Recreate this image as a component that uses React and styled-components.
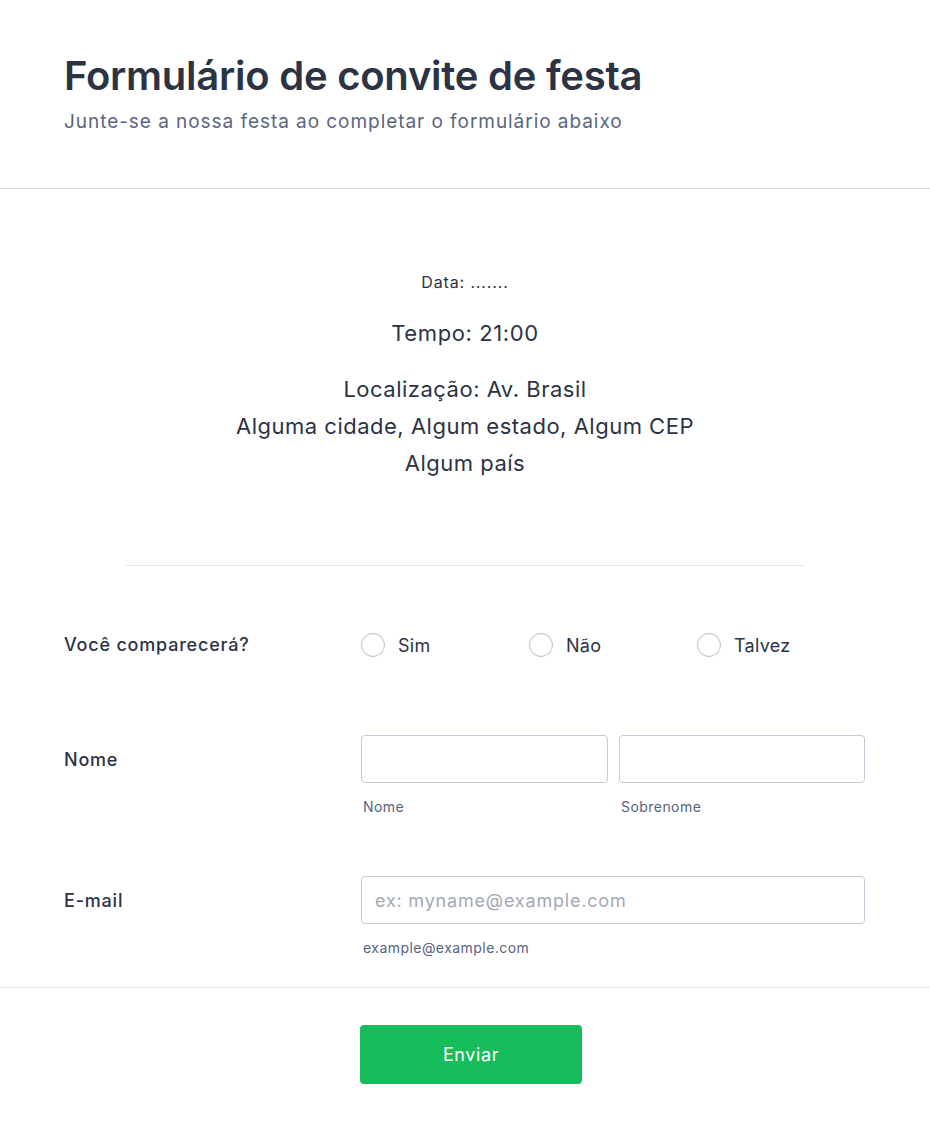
import React from "react";
import styled, { createGlobalStyle } from "styled-components";

const GlobalStyle = createGlobalStyle`
  body {
    margin: 0;
    background: #ffffff;
    font-family: Inter, "Noto Sans", sans-serif;
    color: #2c3345;
  }
  * { box-sizing: border-box; }
`;

const Page = styled.div`
  width: 930px;
  min-height: 1134px;
  background: #fff;
`;

const Header = styled.header`
  padding: 52px 64px 0;
  height: 189px;
  border-bottom: 1px solid #d8dae9;
`;

const Title = styled.h1`
  margin: 0;
  font-size: 40px;
  line-height: 48px;
  font-weight: 600;
  letter-spacing: -0.25px;
  color: #2c3345;
`;

const Subtitle = styled.p`
  margin: 10px 0 0;
  font-size: 19px;
  line-height: 24px;
  letter-spacing: 0.95px;
  color: #5b6580;
`;

const Info = styled.section`
  padding: 81px 64px 83px;
  text-align: center;
  color: #2c3345;
`;

const InfoLine = styled.p`
  margin: 0;
  font-size: ${(p) => p.size}px;
  line-height: ${(p) => p.lh}px;
  letter-spacing: ${(p) => p.ls || 0}px;
  margin-bottom: ${(p) => p.mb || 0}px;
`;

const Divider = styled.hr`
  border: 0;
  border-top: 1px solid #e6e6e6;
  margin: 0 126px;
`;

const Row = styled.div`
  display: grid;
  grid-template-columns: 297px 504px;
  padding: 0 64px;
  align-items: ${(p) => p.align || "center"};
  margin-top: ${(p) => p.mt}px;
`;

const Label = styled.div`
  font-size: 18px;
  font-weight: 500;
  letter-spacing: 0.8px;
  color: #2c3345;
  line-height: 24px;
  padding-top: ${(p) => p.pt || 0}px;
`;

const Options = styled.div`
  display: grid;
  grid-template-columns: 168px 168px 168px;
`;

const Option = styled.label`
  display: flex;
  align-items: center;
  gap: 13px;
  font-size: 18px;
  letter-spacing: 0.3px;
  color: #2c3345;
`;

const Circle = styled.span`
  width: 24px;
  height: 24px;
  border-radius: 50%;
  border: 1px solid #b8bdc9;
  background: #fff;
`;

const Fields = styled.div`
  display: grid;
  grid-template-columns: ${(p) => (p.split ? "247px 246px" : "1fr")};
  column-gap: 11px;
`;

const Field = styled.div`
  display: flex;
  flex-direction: column;
`;

const Input = styled.input`
  height: 48px;
  width: 100%;
  border: 1px solid #c3cad8;
  border-radius: 4px;
  padding: 0 13px;
  font-family: Inter, "Noto Sans", sans-serif;
  font-size: 18px;
  letter-spacing: 0.8px;
  color: #2c3345;
  background: #fff;
  outline: none;
  &::placeholder {
    color: #a3a9b8;
  }
`;

const SubLabel = styled.span`
  margin-top: 15px;
  font-size: 14px;
  line-height: 18px;
  letter-spacing: 0.45px;
  color: #57647e;
  padding-left: 2px;
`;

const Footer = styled.div`
  margin-top: 30px;
  border-top: 1px solid #e6e6e6;
  padding: 37px 0 50px;
  display: flex;
  justify-content: center;
`;

const Button = styled.button`
  width: 222px;
  height: 59px;
  margin-left: 12px;
  border: 0;
  border-radius: 4px;
  background: #18bd5b;
  color: #fff;
  font-family: Inter, "Noto Sans", sans-serif;
  font-size: 18px;
  font-weight: 400;
  letter-spacing: 0.6px;
`;

export default function App() {
  return (
    <Page>
      <GlobalStyle />
      <Header>
        <Title>Formulário de convite de festa</Title>
        <Subtitle>Junte-se a nossa festa ao completar o formulário abaixo</Subtitle>
      </Header>

      <Info>
        <InfoLine size={16} lh={24} ls={0.85} mb={21}>Data: .......</InfoLine>
        <InfoLine size={22} lh={37} ls={0.6} mb={19}>Tempo: 21:00</InfoLine>
        <InfoLine size={22} lh={37} ls={0.5}>Localização: Av. Brasil</InfoLine>
        <InfoLine size={22} lh={37} ls={0.5}>Alguma cidade, Algum estado, Algum CEP</InfoLine>
        <InfoLine size={22} lh={37} ls={0.5}>Algum país</InfoLine>
      </Info>

      <Divider />

      <Row mt={67}>
        <Label>Você comparecerá?</Label>
        <Options>
          <Option><Circle />Sim</Option>
          <Option><Circle />Não</Option>
          <Option><Circle />Talvez</Option>
        </Options>
      </Row>

      <Row mt={78} align="start">
        <Label pt={13}>Nome</Label>
        <Fields split>
          <Field>
            <Input type="text" />
            <SubLabel>Nome</SubLabel>
          </Field>
          <Field>
            <Input type="text" />
            <SubLabel>Sobrenome</SubLabel>
          </Field>
        </Fields>
      </Row>

      <Row mt={60} align="start">
        <Label pt={13}>E-mail</Label>
        <Fields>
          <Field>
            <Input type="email" placeholder="ex: myname@example.com" />
            <SubLabel>example@example.com</SubLabel>
          </Field>
        </Fields>
      </Row>

      <Footer>
        <Button>Enviar</Button>
      </Footer>
    </Page>
  );
}
